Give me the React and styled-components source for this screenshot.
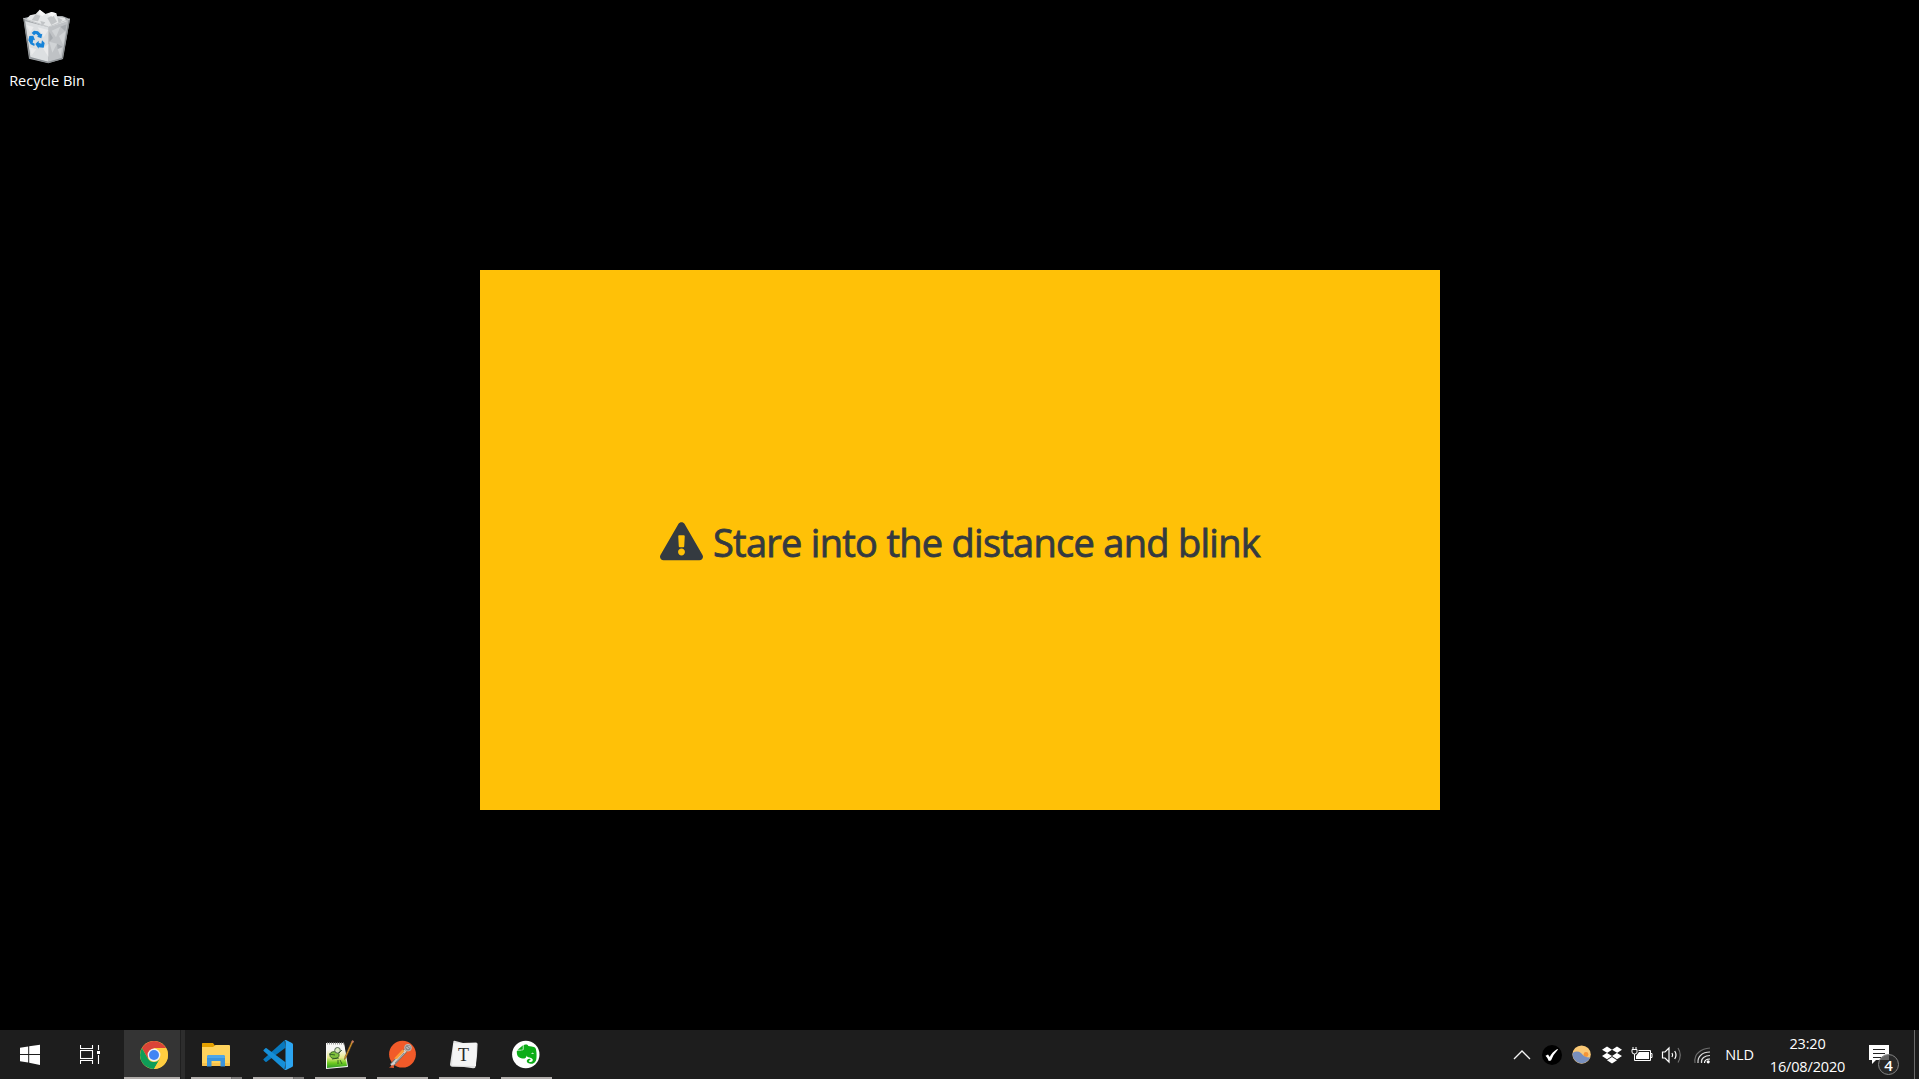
import React from "react";
import styled, { createGlobalStyle } from "styled-components";
import { FaExclamationTriangle, FaDropbox, FaEvernote } from "react-icons/fa";

const GlobalStyle = createGlobalStyle`
  * { box-sizing: border-box; }
  body { margin: 0; background: #000; overflow: hidden; }
`;

const Screen = styled.div`
  width: 100vw;
  height: 100vh;
  display: grid;
  grid-template-rows: 1fr 49px;
  background: #000;
  color: #fff;
  font-family: "Open Sans", "Noto Sans", sans-serif;
`;

const Desktop = styled.main`
  display: grid;
  grid-template-columns: 94px 386px 960px 1fr;
  grid-template-rows: 270px 540px;
  min-height: 0;
`;

const Shortcut = styled.div`
  display: flex;
  flex-direction: column;
  align-items: center;
  padding-top: 9px;
  gap: 7px;
`;

const ShortcutLabel = styled.span`
  font-size: 14.5px;
  letter-spacing: 0;
  line-height: 20px;
  white-space: nowrap;
`;

const Notice = styled.section`
  grid-column: 3;
  grid-row: 2;
  display: flex;
  align-items: center;
  justify-content: center;
  gap: 10px;
  padding-top: 3px;
  background: #ffc107;
  color: #343a40;
`;

const NoticeIcon = styled(FaExclamationTriangle)`
  width: 43px;
  height: 38.5px;
  flex: none;
`;

const NoticeText = styled.h1`
  margin: 0;
  font-size: 38px;
  font-weight: 500;
  line-height: 48px;
  letter-spacing: ${(p) => p.$tracking}px;
  -webkit-text-stroke: 0.8px currentColor;
  white-space: nowrap;
`;

const Taskbar = styled.footer`
  display: flex;
  justify-content: space-between;
  background: #1d1d1d;
`;

const Group = styled.div`
  display: flex;
`;

const SystemButton = styled.div`
  width: 60px;
  display: flex;
  justify-content: center;
  padding-top: 14px;
`;

const Apps = styled.div`
  display: flex;
  padding-left: 3px;
`;

const AppButton = styled.div`
  width: 62px;
  display: flex;
  flex-direction: column;
  justify-content: space-between;
  align-items: center;
  padding: 9px 0 0;
  background: ${(p) =>
    p.$active
      ? "linear-gradient(90deg, #1d1d1d 1px, #343434 1px, #343434 57px, #1f1f1f 57px, #1f1f1f 58px, #2d2d2d 58px)"
      : "transparent"};
`;

const Underline = styled.div`
  align-self: flex-start;
  height: 2px;
  width: ${(p) => (p.$active ? 56 : 51)}px;
  margin-left: ${(p) => (p.$active ? 1 : 6)}px;
  background: ${(p) =>
    p.$stacked ? "linear-gradient(90deg, #b0acaa 40px, #5c5a59 40px, #7c7a79 41px)" : "#b0acaa"};
`;

const TraySlot = styled.div`
  width: ${(p) => p.$width || 30}px;
  display: flex;
  align-items: center;
  justify-content: center;
  font-size: 14.5px;
`;

const Language = styled.span`
  letter-spacing: -0.15px;
  padding: 0 1px 0 0;
`;

const Clock = styled.div`
  width: 90px;
  display: flex;
  flex-direction: column;
  align-items: center;
  padding: 2px 1px 0 0;
  font-size: 14.5px;
  letter-spacing: -0.15px;
  line-height: 23px;
`;

const Notifications = styled.div`
  width: 61px;
  padding: 15px 0 0 16px;
  position: relative;
`;

const Badge = styled.span`
  position: absolute;
  left: 25px;
  top: 24px;
  width: 21px;
  height: 21px;
  border: 1px solid #858585;
  border-radius: 50%;
  background: rgba(45, 45, 45, 0.72);
  font-size: 15px;
  font-weight: 600;
  line-height: 20px;
  text-align: center;
`;

const ShowDesktop = styled.div`
  width: 5px;
  border-left: 1px solid #6b6b6b;
`;

const RecycleBin = () => (
  <svg width="48" height="55" viewBox="72 27 144 165">
    <path d="M73 55 L100 48 L190 48 L213 57 L192 177 L148 190 L90 176Z" fill="#a7abae" />
    <path d="M81 59 L93 46 L110 42 L122 29 L139 42 L157 36 L172 40 L175 51 L197 53 L204 66 L182 79 L148 82Z" fill="#e4e6e7" />
    <path d="M110 42 L124 48 L117 64 L98 61Z M145 54 L163 46 L174 65 L157 75Z M124 63 L139 67 L130 79Z M175 51 L191 60 L179 71Z" fill="#c1c4c6" />
    <path d="M122 29 L139 42 L130 49 L118 40Z M157 36 L172 40 L161 50 L146 44Z" fill="#f5f5f5" />
    <path d="M79 64 L149 82 L148 186 L94 173Z" fill="#dcdfe1" />
    <path d="M149 82 L207 63 L188 175 L148 186Z" fill="#bfc2c5" />
    <path d="M82 75 L104 81 L94 98Z M116 82 L148 90 L134 112Z M92 142 L112 148 L98 166Z M132 145 L148 132 L148 170Z" fill="#eaebec" />
    <path d="M158 92 L184 80 L171 112Z M180 108 L199 94 L193 136Z M151 125 L174 131 L160 158Z M176 147 L189 143 L184 169Z" fill="#d1d4d6" />
    <path d="M151 95 L162 114 L151 125Z M184 80 L203 73 L199 94Z M174 131 L191 140 L176 147Z" fill="#a8acb0" />
    <path d="M73 55 L149 81 L213 57" fill="none" stroke="#c5c8ca" strokeWidth="3" />
    <path d="M75 57 L93 174 M211 59 L190 175" fill="none" stroke="#85898b" strokeWidth="3" />
    <path d="M94 173 L148 187 L190 175" fill="none" stroke="#8e9397" strokeWidth="4" />
    <g fill="#1683d8">
      <path d="M98 99 L105 92 L117 94 L126 103 L130 101 L127 115 L114 110 L118 108 L111 101 L105 106Z" />
      <path d="M91 108 L103 107 L108 121 L103 119 L101 128 L107 131 L106 138 L95 133 L88 121Z" />
      <path d="M109 132 L119 122 L119 128 L127 131 L129 121 L137 129 L134 143 L119 142 L119 146Z" />
    </g>
  </svg>
);

const WindowsLogo = () => (
  <svg width="20" height="21" viewBox="0 0 20 21">
    <path fill="#fff" d="M0 3.7 L8.2 2.4V9.9H0Z M9.2 2.2 L20 .8V9.9H9.2Z M0 10.9H8.2V18.4L0 17.2Z M9.2 10.9H20V21L9.2 18.7Z" />
  </svg>
);

const TaskViewIcon = () => (
  <svg width="20" height="21" viewBox="0 0 20 21" fill="none" stroke="#fff" strokeWidth="1.1">
    <path d="M.5 1V4.5H12.5V1 M.5 20V16.5H12.5V20" />
    <rect x=".5" y="6.5" width="12" height="8" />
    <path d="M18.5 1V6 M18.5 11V20" />
    <path d="M17 7H20V10H17Z" fill="#fff" stroke="none" />
  </svg>
);

const AppSvg = ({ children }) => (
  <svg width="32" height="32" viewBox="0 0 32 32">{children}</svg>
);

const ChromeIcon = () => (
  <AppSvg>
    <circle cx="16" cy="16" r="14" fill="#ffcd40" />
    <path d="M3.9 9 A14 14 0 0 1 28.1 9 H16 L9.9 19.5Z" fill="#db4437" />
    <path d="M3.9 9 A14 14 0 0 0 16 30 L22.1 19.5 A7 7 0 0 1 9.9 19.5Z" fill="#0f9d58" />
    <path d="M28.1 9 H16 A7 7 0 0 1 22.1 19.5 L16 30 A14 14 0 0 0 28.1 9Z" fill="#ffcd40" />
    <circle cx="16" cy="16" r="6.4" fill="#f1f1f1" />
    <circle cx="16" cy="16" r="5" fill="#4285f4" />
  </AppSvg>
);

const ExplorerIcon = () => (
  <AppSvg>
    <path d="M2 4.5 Q2 4 2.5 4 H13 L15.3 7 L14 10 H2Z" fill="#e5a100" />
    <path d="M2 8 H13 L15.5 6 H29 Q30 6 30 7 V26 Q30 27 29 27 H3 Q2 27 2 26Z" fill="#ffd35c" />
    <path d="M2 24 H30 V26 Q30 27 29 27 H3 Q2 27 2 26Z" fill="#f8c24b" />
    <path d="M7 27.5 V18 Q7 16 9 16 H23 Q25 16 25 18 V27.5 H20.5 V22 H11.5 V27.5Z" fill="#3b94dc" />
    <path d="M7 19 V18 Q7 16 9 16 H23 Q25 16 25 18 V19Z" fill="#4fa7e8" />
  </AppSvg>
);

const VSCodeIcon = () => (
  <AppSvg>
    <path d="M22.5 1.2 L1.6 19.9 Q1 20.5 1.6 21.1 L3.4 22.8 Q4 23.2 4.6 22.8 L23.5 8.8Z" fill="#0879bf" />
    <path d="M22.5 30.8 L1.6 12.1 Q1 11.5 1.6 10.9 L3.4 9.2 Q4 8.8 4.6 9.2 L23.5 23.2Z" fill="#168fd8" />
    <path d="M22.5 1.2 Q23.2 .8 24 1.1 L30 4 Q31 4.5 31 5.5 V26.5 Q31 27.5 30 28 L24 30.9 Q23 31.3 22.2 30.5 Q23.5 30.5 23.5 29 V3 Q23.5 1.5 22.5 1.2Z" fill="#2ca5f1" />
  </AppSvg>
);

const NotepadIcon = () => (
  <AppSvg>
    <defs>
      <linearGradient id="page" x1="0" y1="0" x2="0" y2="1">
        <stop offset=".2" stopColor="#f7f7f5" />
        <stop offset=".55" stopColor="#e7e989" />
        <stop offset=".78" stopColor="#70cc20" />
        <stop offset="1" stopColor="#2d9829" />
      </linearGradient>
    </defs>
    <path d="M2 4 H20 L22 15 L24 28 L2 30Z" fill="#f7f7f5" />
    <path d="M3 6 H20 L23 27 L3 29Z" fill="url(#page)" />
    <path d="M3 4.5H20" stroke="#999" strokeWidth="2" strokeDasharray="1 1" />
    <ellipse cx="10.5" cy="16" rx="4.6" ry="3.4" fill="#7fc03c" stroke="#26541b" strokeWidth=".8" />
    <circle cx="13.5" cy="11.3" r="2.8" fill="#dbeabf" stroke="#455747" strokeWidth=".9" />
    <path d="M5 15 L11 16 M8 20 L15 19 M14 21 V25 M16 21 L18 25 M15 14 L18 11" stroke="#254d20" strokeWidth=".8" />
    <path d="M29.5 2 L22 18.5 L20.5 20.5 L21 17.5 L28 1.7Z" fill="#eaa528" stroke="#765021" strokeWidth=".6" />
    <path d="M28.2 1.3 L30 2.2 L29 4.3 L27.3 3.5Z" fill="#c47862" />
  </AppSvg>
);

const PostmanIcon = () => (
  <AppSvg>
    <circle cx="16.5" cy="15.2" r="13.4" fill="#f15a29" />
    <path d="M9 20 L18 10.5 L21 13 L11 21Z" fill="#ff9b37" />
    <path d="M5.5 26.5 L19.5 11.5" stroke="#75706d" strokeWidth="4.2" />
    <path d="M5.5 26.5 L19.5 11.5" stroke="#d2d0cc" strokeWidth="2.6" />
    <path d="M8 19.5 L16.5 10.5 L18.5 12.2 L11 20Z" fill="#ff9b37" />
    <path d="M9 24 L18 14" stroke="#696969" strokeWidth=".7" />
    <circle cx="22" cy="8.7" r="3.4" fill="#8a8887" stroke="#c8c5c1" strokeWidth=".8" />
    <path d="M20.5 8 L22.5 10 M22.5 6.8 L24 8.6" stroke="#ddd" />
    <path d="M3 28.5 L7.5 25.5 L8 29Z" fill="#e25930" />
  </AppSvg>
);

const Letter = styled.text`
  font-family: "Liberation Serif", serif;
  font-size: 18px;
`;

const TyporaIcon = () => (
  <AppSvg>
    <path d="M5.5 2 Q6.5 1.7 7.5 2 L15 4 L28 3.5 Q29.5 3.5 29.6 5 L29 17 L27.5 28 Q27 29.5 25 29.3 L16 28 L4 27.7 Q2 27.5 2 25.5 L3.7 14Z" fill="#e1e1e1" />
    <path d="M5.5 4.3 L28.5 4 L28 27 L4 26.5Z" fill="#f5f5f5" />
    <Letter x="15.5" y="21.5" textAnchor="middle" fill="#292929">T</Letter>
  </AppSvg>
);

const EvernoteIcon = () => (
  <AppSvg>
    <circle cx="15.8" cy="15.5" r="13.7" fill="#fff" />
    <FaEvernote x="6.5" y="4.2" size={22} preserveAspectRatio="none" viewBox="0 0 420 512" color="#0dad18" />
  </AppSvg>
);

const ChevronIcon = () => (
  <svg width="18" height="12" viewBox="0 0 18 12">
    <path d="M1 10 L9 2 L17 10" fill="none" stroke="#f4f4f4" strokeWidth="1.3" />
  </svg>
);

const CheckIcon = () => (
  <svg width="20" height="20" viewBox="0 0 20 20">
    <circle cx="10" cy="10" r="10" fill="#000" />
    <path d="M3.5 10.8 L6 9.6 L7.8 12 Q10 7 15.3 4 L16 4.5 Q11.5 9 9 15.5 L6.8 16 Q5.3 12.5 3.5 10.8Z" fill="#fff" />
  </svg>
);

const SunsetIcon = () => (
  <svg width="20" height="20" viewBox="0 0 20 20">
    <circle cx="9.6" cy="9.6" r="9.2" fill="#fac875" />
    <circle cx="14" cy="9.5" r="2.4" fill="#f49538" />
    <path d="M.6 8 Q5 5.2 9 8 Q13 13 18.3 12.5 A9.2 9.2 0 0 1 .6 8Z" fill="#788fbd" />
  </svg>
);

const BatteryIcon = () => (
  <svg width="22" height="18" viewBox="0 0 22 18">
    <path d="M7.5 4.5H19.5V14.5H3.5V11 M20 7.5H21V11.5H20" fill="none" stroke="#fff" strokeWidth="1" />
    <path d="M5 13V10L8 6H18V13Z" fill="#fff" />
    <path d="M2 1V4 M5 1V4 M1 3.5H6V6Q6 8 3.5 8Q1 8 1 6Z M3.5 8V12" fill="none" stroke="#fff" strokeWidth="1" />
  </svg>
);

const SpeakerIcon = () => (
  <svg width="22" height="20" viewBox="0 0 22 20" fill="none" stroke="#fff" strokeWidth="1.2">
    <path d="M1.5 7H4L8 3V17L4 13H1.5Z" />
    <path d="M11 8Q12.3 10 11 12 M13.7 6Q16.3 10 13.7 14" />
    <path d="M17 3Q21.5 10 17 17.5" stroke="#737373" />
  </svg>
);

const WifiIcon = () => (
  <svg width="18" height="18" viewBox="0 0 18 18" fill="none" strokeWidth="1.2">
    <path d="M2 17Q1 10 6 6Q10 2.6 17 2" stroke="#6c6c6c" />
    <path d="M5 17Q4.5 12 8 9Q11 6 17 6 M8.5 17Q8 13.5 10.5 11.5Q13 9.5 17 9.5" stroke="#dedede" />
    <path d="M11.5 17Q11.5 13 17 13" stroke="#fff" />
    <circle cx="15.2" cy="15.8" r="1.6" fill="#fff" />
  </svg>
);

const MessageIcon = () => (
  <svg width="20" height="19" viewBox="0 0 20 19">
    <path d="M0 0H20V15H7L3 19V15H0Z" fill="#fff" />
    <path d="M4 4.5H16 M4 8.5H16 M4 12.5H12" stroke="#222" strokeWidth="1" />
  </svg>
);

const apps = [
  { name: "chrome", Icon: ChromeIcon, active: true },
  { name: "explorer", Icon: ExplorerIcon, stacked: true },
  { name: "vscode", Icon: VSCodeIcon, stacked: true },
  { name: "notepad", Icon: NotepadIcon },
  { name: "postman", Icon: PostmanIcon },
  { name: "typora", Icon: TyporaIcon },
  { name: "evernote", Icon: EvernoteIcon },
];

export default function App() {
  return (
    <Screen>
      <GlobalStyle />
      <Desktop>
        <Shortcut>
          <RecycleBin />
          <ShortcutLabel>Recycle Bin</ShortcutLabel>
        </Shortcut>
        <Notice>
          <NoticeIcon />
          <NoticeText $tracking={-0.73}>Stare into the distance and blink</NoticeText>
        </Notice>
      </Desktop>
      <Taskbar>
        <Group>
          <SystemButton><WindowsLogo /></SystemButton>
          <SystemButton><TaskViewIcon /></SystemButton>
          <Apps>
            {apps.map(({ name, Icon, active, stacked }) => (
              <AppButton key={name} $active={active}>
                <Icon />
                <Underline $active={active} $stacked={stacked} />
              </AppButton>
            ))}
          </Apps>
        </Group>
        <Group>
          <TraySlot><ChevronIcon /></TraySlot>
          <TraySlot><CheckIcon /></TraySlot>
          <TraySlot><SunsetIcon /></TraySlot>
          <TraySlot><FaDropbox size={20} /></TraySlot>
          <TraySlot><BatteryIcon /></TraySlot>
          <TraySlot><SpeakerIcon /></TraySlot>
          <TraySlot><WifiIcon /></TraySlot>
          <TraySlot $width={46}><Language>NLD</Language></TraySlot>
          <Clock>
            <span>23:20</span>
            <span>16/08/2020</span>
          </Clock>
          <Notifications>
            <MessageIcon />
            <Badge>4</Badge>
          </Notifications>
          <ShowDesktop />
        </Group>
      </Taskbar>
    </Screen>
  );
}
